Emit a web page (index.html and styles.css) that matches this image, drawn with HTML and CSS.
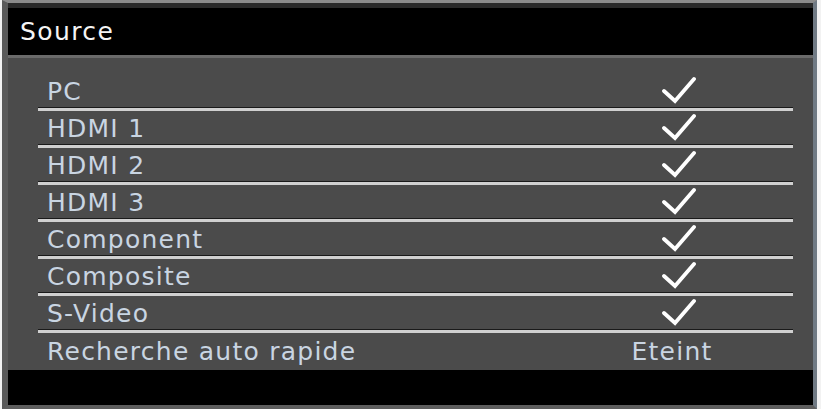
FILE: index.html
```html
<!DOCTYPE html>
<html>
<head>
<meta charset="utf-8">
<link rel="stylesheet" href="styles.css">
</head>
<body>
<div class="frame">
  <div class="header">Source</div>
  <div class="body">
    <div class="row"><span class="label">PC</span><span class="value"><svg class="check" viewBox="0 0 34 28"><path d="M2 15 L13 25 L32 3" /></svg></span></div>
    <div class="row"><span class="label">HDMI 1</span><span class="value"><svg class="check" viewBox="0 0 34 28"><path d="M2 15 L13 25 L32 3" /></svg></span></div>
    <div class="row"><span class="label">HDMI 2</span><span class="value"><svg class="check" viewBox="0 0 34 28"><path d="M2 15 L13 25 L32 3" /></svg></span></div>
    <div class="row"><span class="label">HDMI 3</span><span class="value"><svg class="check" viewBox="0 0 34 28"><path d="M2 15 L13 25 L32 3" /></svg></span></div>
    <div class="row"><span class="label">Component</span><span class="value"><svg class="check" viewBox="0 0 34 28"><path d="M2 15 L13 25 L32 3" /></svg></span></div>
    <div class="row"><span class="label">Composite</span><span class="value"><svg class="check" viewBox="0 0 34 28"><path d="M2 15 L13 25 L32 3" /></svg></span></div>
    <div class="row"><span class="label">S-Video</span><span class="value"><svg class="check" viewBox="0 0 34 28"><path d="M2 15 L13 25 L32 3" /></svg></span></div>
    <div class="row last"><span class="label">Recherche auto rapide</span><span class="value"><span class="text">Eteint</span></span></div>
  </div>
  <div class="footer"></div>
</div>
</body>
</html>
```
FILE: styles.css
```css
html, body {
  margin: 0;
  padding: 0;
  background: #f2f2f2;
}
body {
  width: 821px;
  height: 409px;
  overflow: hidden;
  font-family: "DejaVu Sans", Verdana, sans-serif;
}
.frame {
  margin-left: 2px;
  width: 815px;
  height: 409px;
  box-sizing: border-box;
  background: #4b4b4b;
  border-top: 3px solid #8c8c8c;
  border-left: 6px solid #5a5a5a;
  border-right: 4px solid #707a84;
  border-bottom: 4px solid #5e5e5e;
  display: flex;
  flex-direction: column;
}
.header {
  background: #000;
  border-top: 5px solid #2a2a2a;
  box-sizing: border-box;
  color: #f4f4f4;
  font-size: 25px;
  letter-spacing: 1.4px;
  line-height: 47px;
  padding-left: 12px;
  border-bottom: 3px solid #6a6a6a;
  height: 55px;
}
.body {
  flex: 1;
  padding: 16px 0 0 30px;
  box-sizing: border-box;
  display: flex;
  flex-direction: column;
}
.row {
  width: 755px;
  height: 37px;
  box-sizing: border-box;
  display: flex;
  align-items: center;
  border-bottom: 3px solid #d0d0d0;
  box-shadow: inset 0 -1px 0 #1a1a1a;
  color: #c9d5e2;
  font-size: 25px;
  letter-spacing: 1.25px;
}
.row.last {
  border-bottom: none;
  box-shadow: none;
}
.label {
  padding-left: 9px;
  flex: 1;
}
.value {
  width: 160px;
  display: flex;
  justify-content: center;
  margin-right: 34px;
}
.text {
  margin-right: 14px;
}
.check {
  width: 34px;
  height: 28px;
  margin-top: -2px;
  fill: none;
  stroke: #ffffff;
  stroke-width: 3.8;
  stroke-linecap: round;
  stroke-linejoin: miter;
}
.footer {
  background: #000;
  height: 35px;
}
```
